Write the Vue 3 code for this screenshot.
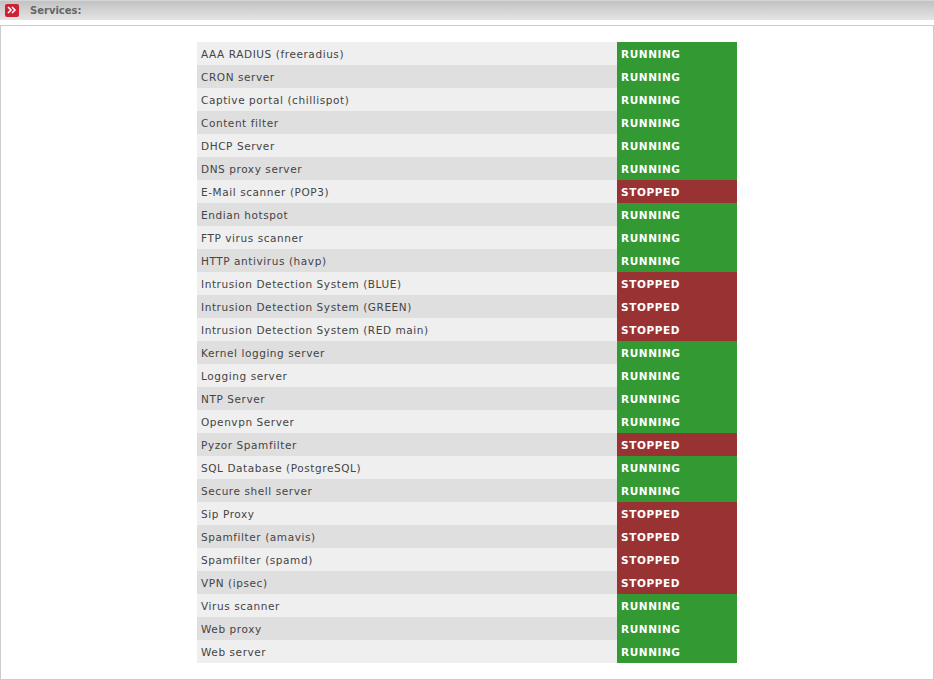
<script setup>
const services = [
  ['AAA RADIUS (freeradius)', 1], ['CRON server', 1], ['Captive portal (chillispot)', 1],
  ['Content filter', 1], ['DHCP Server', 1], ['DNS proxy server', 1], ['E-Mail scanner (POP3)', 0],
  ['Endian hotspot', 1], ['FTP virus scanner', 1], ['HTTP antivirus (havp)', 1],
  ['Intrusion Detection System (BLUE)', 0], ['Intrusion Detection System (GREEN)', 0],
  ['Intrusion Detection System (RED main)', 0], ['Kernel logging server', 1], ['Logging server', 1],
  ['NTP Server', 1], ['Openvpn Server', 1], ['Pyzor Spamfilter', 0], ['SQL Database (PostgreSQL)', 1],
  ['Secure shell server', 1], ['Sip Proxy', 0], ['Spamfilter (amavis)', 0], ['Spamfilter (spamd)', 0],
  ['VPN (ipsec)', 0], ['Virus scanner', 1], ['Web proxy', 1], ['Web server', 1]
]
</script>

<template>
  <div class="page">
    <header class="bar">
      <span class="badge">
        <svg width="10" height="8" viewBox="0 0 10 8">
          <path d="M1 1l3 3-3 3M5 1l3 3-3 3" fill="none" stroke="#fff" stroke-width="1.6" />
        </svg>
      </span>
      <span class="title">Services:</span>
    </header>
    <main class="panel">
      <div class="list">
        <div v-for="(s, i) in services" :key="s[0]" class="row" :class="i % 2 ? 'even' : 'odd'">
          <span class="name">{{ s[0] }}</span>
          <span class="status" :class="s[1] ? 'on' : 'off'">{{ s[1] ? 'RUNNING' : 'STOPPED' }}</span>
        </div>
      </div>
    </main>
  </div>
</template>

<style>
html, body { margin: 0; background: #fff; }
</style>

<style scoped>
.page {
  width: 934px;
  height: 680px;
  overflow: hidden;
  font-family: "DejaVu Sans", Verdana, sans-serif;
  font-size: 10px;
}
.bar {
  height: 19px;
  border-top: 1px solid #d6d6d6;
  background: linear-gradient(#c2c2c2, #e4e4e4);
  display: flex;
  align-items: center;
  padding-left: 5px;
}
.badge {
  width: 14px;
  height: 13px;
  margin-top: -1px;
  border-radius: 2px;
  background: #cc2233;
  display: flex;
  align-items: center;
  justify-content: center;
}
.title {
  margin-left: 11px;
  margin-top: -1px;
  font-weight: bold;
  color: #666;
}
.panel {
  margin-top: 5px;
  height: 655px;
  box-sizing: border-box;
  border: 1px solid #ccc;
  padding-top: 16px;
  display: flex;
  justify-content: center;
}
.list { width: 540px; }
.row { display: flex; height: 23px; line-height: 25px; font-size: 10.5px; letter-spacing: 0.58px; }
.odd { background: #efefef; }
.even { background: #dfdfdf; }
.name { flex: 1; padding-left: 4px; color: #444; }
.status {
  width: 120px;
  height: 23px;
  box-sizing: border-box;
  padding-left: 4px;
  color: #fff;
  font-weight: bold;
}
.on { background: #339933; }
.off { background: #993333; }
</style>
